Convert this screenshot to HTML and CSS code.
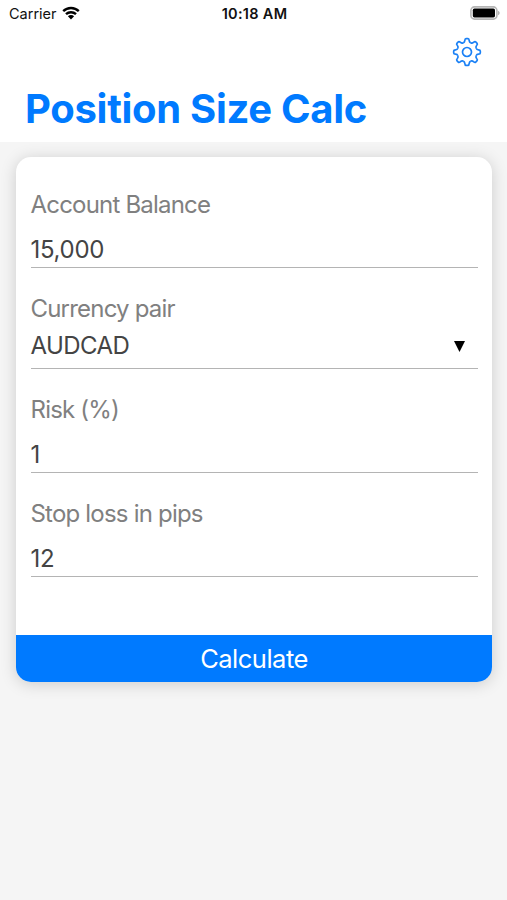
FILE: index.html
```
<!DOCTYPE html>
<html lang="en">
<head>
    <meta charset="UTF-8">
    <meta name="viewport" content="width=device-width, initial-scale=1.0">
    <title>Position Size Calc</title>
    <link rel="stylesheet" href="styles.css">
</head>
<body>

    <header class="header">
        <div class="status-bar">
            <div class="carrier">
                <span>Carrier</span>
                <svg class="wifi" viewBox="0 0 18 14">
                    <path d="M1.2 5.2a11.2 11.2 0 0 1 15.6 0M4 8.2a7.2 7.2 0 0 1 10 0" />
                    <path class="dot" d="M5.9 10.2a4.4 4.4 0 0 1 6.2 0L9 13.4z" />
                </svg>
            </div>
            <div class="time">10:18 AM</div>
            <svg class="battery" viewBox="0 0 30 14">
                <rect class="shell" x="0.9" y="0.9" width="26" height="12.2" rx="3.6" />
                <rect x="2.8" y="2.6" width="22.2" height="8.8" rx="1.6" />
                <path class="cap" d="M28 4.8c2.2.8 2.2 3.6 0 4.4z" />
            </svg>
        </div>
        <button class="settings" aria-label="Settings">
            <svg viewBox="-15 -15 30 30">
                <defs>
                    <path id="tooth" d="M-3.79-9.15C-2.6-9.65-2.3-10.2-2.2-11.4C-2.1-12.8-1.8-13.3-1-13.3H1C1.8-13.3 2.1-12.8 2.2-11.4C2.3-10.2 2.6-9.65 3.79-9.15" />
                </defs>
                <use href="#tooth" />
                <use href="#tooth" transform="rotate(45)" />
                <use href="#tooth" transform="rotate(90)" />
                <use href="#tooth" transform="rotate(135)" />
                <use href="#tooth" transform="rotate(180)" />
                <use href="#tooth" transform="rotate(225)" />
                <use href="#tooth" transform="rotate(270)" />
                <use href="#tooth" transform="rotate(315)" />
                <circle r="4.5" />
            </svg>
        </button>
        <h1>Position Size Calc</h1>
    </header>

    <form class="card">
        <div class="field">
            <label for="balance">Account Balance</label>
            <input id="balance" class="balance" type="text" value="15,000">
        </div>
        <div class="field picker">
            <label>Currency pair</label>
            <div class="select">
                <span class="pair">AUDCAD</span>
                <svg class="arrow" viewBox="0 0 11 11"><path d="M0 0h11L5.5 11z" /></svg>
            </div>
        </div>
        <div class="field">
            <label for="risk">Risk (%)</label>
            <input id="risk" type="text" value="1">
        </div>
        <div class="field">
            <label for="stop">Stop loss in pips</label>
            <input id="stop" type="text" value="12">
        </div>
        <button class="calculate" type="button">Calculate</button>
    </form>

</body>
</html>
```
FILE: styles.css
```
* {
    box-sizing: border-box;
    margin: 0;
    padding: 0;
}

body {
    font-family: Inter, "Liberation Sans", sans-serif;
    min-height: 100vh;
    background-color: #f5f5f5;
    color: #444;
}

.header {
    display: flex;
    flex-direction: column;
    height: 142px;
    background-color: #fff;
}

.status-bar {
    display: grid;
    grid-template-columns: 1fr auto 1fr;
    align-items: center;
    height: 27px;
    padding: 0 7px 0 9px;
    font-size: 14.5px;
    color: #111;
}

.carrier {
    display: flex;
    align-items: center;
    gap: 5px;
}

.wifi {
    width: 18px;
    height: 14px;
    margin-top: -2px;
    fill: none;
    stroke: #000;
    stroke-width: 2.4;
}

.wifi .dot {
    fill: #000;
    stroke: none;
}

.time {
    font-weight: 600;
    letter-spacing: 0.3px;
}

.battery {
    width: 30px;
    height: 14px;
    margin-top: -1px;
    justify-self: end;
}

.battery .shell {
    fill: none;
    stroke: #b5b5b5;
    stroke-width: 1.6;
}

.battery .cap {
    fill: #b5b5b5;
}

.settings {
    width: 30px;
    height: 30px;
    margin: 10px 25.5px 0 0;
    align-self: flex-end;
    background: none;
    border: none;
    cursor: pointer;
}

.settings svg {
    display: block;
    fill: none;
    stroke: #1a80f5;
    stroke-width: 1.7;
}

h1 {
    margin: 17px 0 0 25px;
    font-size: 40px;
    line-height: 50px;
    font-weight: 700;
    letter-spacing: -0.3px;
    color: #007aff;
    white-space: nowrap;
}

.card {
    display: flex;
    flex-direction: column;
    height: 525px;
    margin: 15px 15px 0 16px;
    padding-top: 29px;
    background-color: #fff;
    border-radius: 15px;
    box-shadow: 0 2px 16px rgba(0, 0, 0, 0.17);
}

.field {
    display: flex;
    flex-direction: column;
    height: 82px;
    margin: 0 14px 22px 14.5px;
    border-bottom: 1px solid #b4b4b4;
    font-size: 24px;
    letter-spacing: -0.8px;
}

.field label {
    line-height: 38px;
    color: #808080;
}

.field input {
    width: 100%;
    height: 34px;
    margin-top: 8px;
    border: none;
    outline: none;
    background: none;
    font: inherit;
    letter-spacing: -0.3px;
    color: #444;
}

.picker {
    height: 79px;
}

.select {
    display: flex;
    align-items: center;
    justify-content: space-between;
    height: 34px;
    padding-right: 13px;
    letter-spacing: -0.6px;
}

.arrow {
    width: 11px;
    height: 11px;
    margin-top: 2px;
}

.calculate {
    height: 47px;
    margin-top: auto;
    background-color: #007aff;
    border: none;
    border-radius: 0 0 15px 15px;
    font: inherit;
    font-size: 25.5px;
    letter-spacing: -0.5px;
    color: #fff;
    cursor: pointer;
}
```
